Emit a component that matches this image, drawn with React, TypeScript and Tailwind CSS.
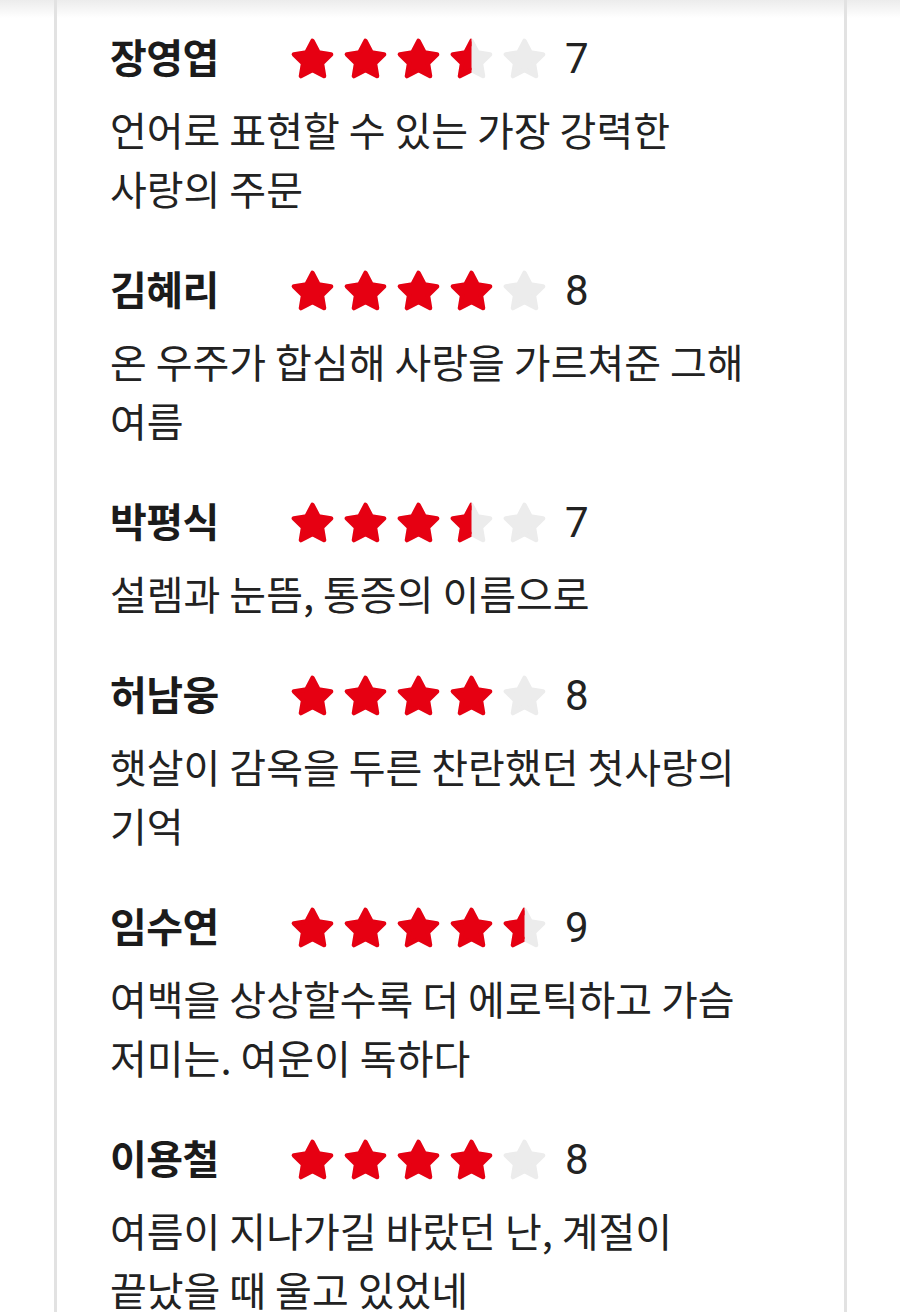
import { useId } from 'react'

type Review = {
  name: string
  score: number
  comment: string
}

const reviews: Review[] = [
  { name: '장영엽', score: 7, comment: '언어로 표현할 수 있는 가장 강력한 사랑의 주문' },
  { name: '김혜리', score: 8, comment: '온 우주가 합심해 사랑을 가르쳐준 그해 여름' },
  { name: '박평식', score: 7, comment: '설렘과 눈뜸, 통증의 이름으로' },
  { name: '허남웅', score: 8, comment: '햇살이 감옥을 두른 찬란했던 첫사랑의 기억' },
  { name: '임수연', score: 9, comment: '여백을 상상할수록 더 에로틱하고 가슴 저미는. 여운이 독하다' },
  { name: '이용철', score: 8, comment: '여름이 지나가길 바랐던 난, 계절이 끝났을 때 울고 있었네' },
]

const STAR_POINTS = '12,2.9 14.95,8.6 21.1,9.5 16.6,13.9 17.65,20.1 12,17.2 6.35,20.1 7.4,13.9 2.9,9.5 9.05,8.6'

// fill: 0..1, how much of the star is red (left to right)
function Star({ fill }: { fill: number }) {
  const id = useId()
  return (
    <svg width="49" height="49" viewBox="0 0 24 24" className="shrink-0">
      <defs>
        <clipPath id={id}>
          <rect x="0" y="0" width={24 * fill} height="24" />
        </clipPath>
      </defs>
      <polygon points={STAR_POINTS} fill="#ececec" stroke="#ececec" strokeWidth="2.2" strokeLinejoin="round" />
      {fill > 0 && (
        <polygon
          points={STAR_POINTS}
          fill="#e60012"
          stroke="#e60012"
          strokeWidth="2.2"
          strokeLinejoin="round"
          clipPath={`url(#${id})`}
        />
      )}
    </svg>
  )
}

function Stars({ score }: { score: number }) {
  const value = score / 2
  return (
    <div className="flex items-center gap-[4px] mt-[6px]">
      {[0, 1, 2, 3, 4].map((i) => (
        <Star key={i} fill={Math.max(0, Math.min(1, value - i))} />
      ))}
    </div>
  )
}

function ReviewItem({ review }: { review: Review }) {
  return (
    <div className="pb-[46px]">
      <div className="flex items-center h-[48px]">
        <span className="w-[178px] shrink-0 text-[40px] font-bold text-[#1b1b1b] tracking-[-0.5px]">
          {review.name}
        </span>
        <Stars score={review.score} />
        <span className="ml-[16px] mt-[4px] text-[42px] font-['Roboto',sans-serif] font-normal text-[#222]">
          {review.score}
        </span>
      </div>
      <p className="mt-[20px] w-[660px] text-[40px] leading-[59px] text-[#222] break-keep">
        {review.comment}
      </p>
    </div>
  )
}

export default function App() {
  return (
    <div className="min-h-[1312px] bg-[linear-gradient(to_bottom,#ececec,#ffffff_18px)] font-['Noto_Sans_CJK_KR','Noto_Sans',sans-serif]">
      <div className="ml-[54px] w-[793px] min-h-[1312px] border-x-[3px] border-[#e2e2e2] pl-[53px] pt-[32px]">
        {reviews.map((r) => (
          <ReviewItem key={r.name} review={r} />
        ))}
      </div>
    </div>
  )
}
